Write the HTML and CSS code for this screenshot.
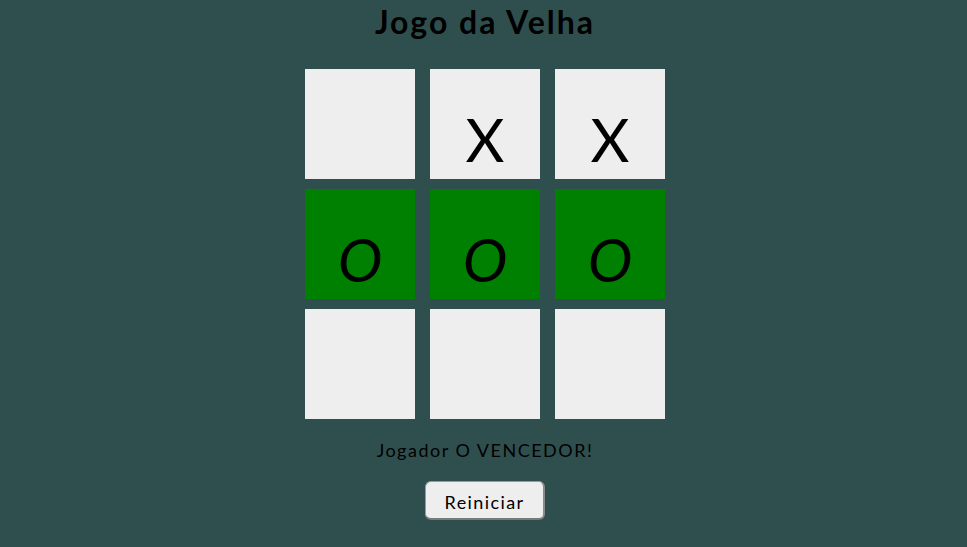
FILE: index.html
```html
<!DOCTYPE html>
<html lang="pt">
<head>
<meta charset="utf-8">
<title>Jogo da Velha</title>
<link rel="stylesheet" href="styles.css">
</head>
<body>
<main class="game">
  <h1 class="title">Jogo da Velha</h1>
  <div class="board">
    <div class="cell"></div>
    <div class="cell">X</div>
    <div class="cell">X</div>
    <div class="cell win"><span class="o">O</span></div>
    <div class="cell win"><span class="o">O</span></div>
    <div class="cell win"><span class="o">O</span></div>
    <div class="cell"></div>
    <div class="cell"></div>
    <div class="cell"></div>
  </div>
  <p class="status">Jogador O VENCEDOR!</p>
  <button class="reset" type="button">Reiniciar</button>
</main>
</body>
</html>
```
FILE: styles.css
```css
html, body {
  margin: 0;
  padding: 0;
  background: #2f4f4f;
  height: 100%;
}
body {
  font-family: "Comic Sans MS", "Lato", "DejaVu Sans", sans-serif;
  color: #000;
  padding-left: 3px;
  box-sizing: border-box;
}
.game {
  display: flex;
  flex-direction: column;
  align-items: center;
}
.title {
  margin: 0;
  font-size: 32px;
  font-weight: bold;
  line-height: 44px;
  letter-spacing: 2px;
}
.board {
  margin-top: 25px;
  display: grid;
  grid-template-columns: repeat(3, 110px);
  grid-auto-rows: 110px;
  column-gap: 15px;
  row-gap: 10px;
}
.cell {
  background: #eeeeee;
  display: flex;
  align-items: flex-end;
  justify-content: center;
  font-size: 60px;
  line-height: 1;
  padding-bottom: 10px;
  box-sizing: border-box;
}
.cell.win {
  background: #008000;
}
.o {
  font-style: italic;
}
.status {
  margin: 19px 0 0;
  font-size: 18px;
  line-height: 24px;
  letter-spacing: 1.5px;
}
.reset {
  margin-top: 19px;
  width: 120px;
  height: 39px;
  font-family: inherit;
  font-size: 18px;
  letter-spacing: 1.4px;
  background: #eeeeee;
  border: 1px solid #9a9a9a;
  border-bottom: 2px solid #7a7a7a;
  border-right: 2px solid #8a8a8a;
  border-radius: 6px;
  color: #000;
  padding: 3px 0 0;
}
```
